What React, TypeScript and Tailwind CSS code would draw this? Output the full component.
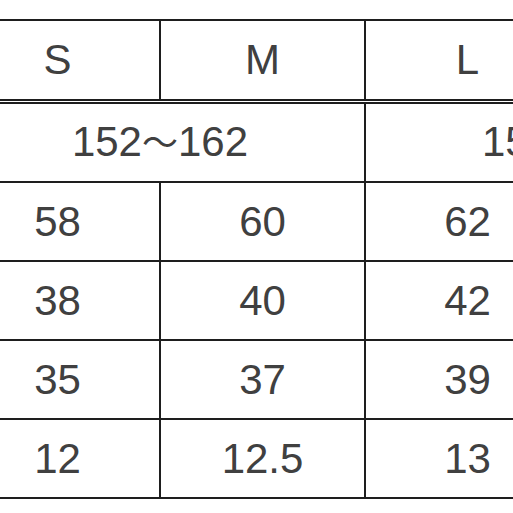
const header = ["S", "M", "L", "XL"];

const rows = [
  ["58", "60", "62", "64"],
  ["38", "40", "42", "44"],
  ["35", "37", "39", "41"],
  ["12", "12.5", "13", "13.5"],
];

function Range({ from, to }: { from: string; to: string }) {
  return (
    <>
      {from}
      <span className="text-[36px]">〜</span>
      {to}
    </>
  );
}

export default function App() {
  return (
    <div
      className="w-[513px] h-[513px] overflow-hidden bg-white text-[#404040]"
      style={{ fontFamily: '"Liberation Sans", "Noto Sans CJK JP", sans-serif' }}
    >
      <table className="mt-[19px] ml-[-46px] w-[820px] table-fixed border-collapse text-[42px] leading-none">
        <colgroup>
          <col className="w-[205px]" />
          <col className="w-[205px]" />
          <col className="w-[205px]" />
          <col className="w-[205px]" />
        </colgroup>
        <thead>
          <tr className="h-[81px]">
            {header.map((h) => (
              <th
                key={h}
                className="border-2 border-b-[5px] border-[#1e1e1e] font-normal text-center align-middle [border-bottom-style:double]"
              >
                {h}
              </th>
            ))}
          </tr>
        </thead>
        <tbody>
          <tr className="h-[81px]">
            <td colSpan={2} className="border-2 border-[#1e1e1e] text-center align-middle">
              <Range from="152" to="162" />
            </td>
            <td colSpan={2} className="border-2 border-[#1e1e1e] text-center align-middle">
              <Range from="157" to="167" />
            </td>
          </tr>
          {rows.map((r, i) => (
            <tr key={i} className="h-[79px]">
              {r.map((v, j) => (
                <td key={j} className="border-2 border-[#1e1e1e] text-center align-middle">
                  {v}
                </td>
              ))}
            </tr>
          ))}
        </tbody>
      </table>
    </div>
  );
}
